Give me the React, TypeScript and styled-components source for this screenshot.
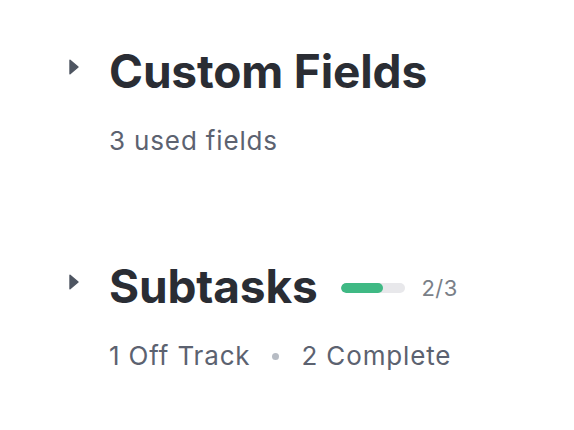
import React from "react";
import styled, { createGlobalStyle } from "styled-components";

const Global = createGlobalStyle`
  html, body { margin: 0; padding: 0; background: #ffffff; }
  body { font-family: Inter, "Noto Sans", sans-serif; }
`;

const Page = styled.div`
  display: flex;
  flex-direction: column;
  gap: 107px;
  padding: 48px 0 0 69px;
`;

const Section = styled.section`
  display: flex;
  flex-direction: column;
  gap: 32px;
`;

const HeaderRow = styled.div`
  display: flex;
  align-items: center;
  height: 46px;
`;

const Caret = styled.svg`
  width: 10px;
  height: 16px;
  flex: none;
  margin: 0 30px 8px 0;
`;

const Title = styled.h2`
  margin: 0;
  font-size: 46px;
  line-height: 46px;
  font-weight: 700;
  color: #2a2d34;
  letter-spacing: -0.15px;
`;

const Progress = styled.div`
  display: flex;
  align-items: center;
  gap: 17px;
  margin-left: 23px;
  padding-top: 4px;
`;

const Track = styled.div`
  width: 64px;
  height: 10px;
  border-radius: 5px;
  background: #e8e8eb;
  overflow: hidden;
`;

const Fill = styled.div`
  height: 100%;
  background: #3fb984;
  border-radius: 5px;
`;

const Count = styled.span`
  font-size: 22px;
  letter-spacing: 0.4px;
  color: #7a7f88;
`;

const Meta = styled.div`
  display: flex;
  align-items: center;
  gap: 22px;
  padding-left: 40px;
  font-size: 26px;
  line-height: 30px;
  letter-spacing: 0.85px;
  color: #5c6270;
`;

const Dot = styled.span`
  width: 7px;
  height: 7px;
  border-radius: 50%;
  background: #b7bcc4;
`;

const CaretIcon = () => (
  <Caret viewBox="0 0 10 16">
    <path
      d="M1 1.2 L9 8 L1 14.8 Z"
      fill="#4e5561"
      stroke="#4e5561"
      strokeWidth="1.4"
      strokeLinejoin="round"
    />
  </Caret>
);

export default function App() {
  return (
    <>
      <Global />
      <Page>
        <Section>
          <HeaderRow>
            <CaretIcon />
            <Title>Custom Fields</Title>
          </HeaderRow>
          <Meta>3 used fields</Meta>
        </Section>
        <Section>
          <HeaderRow>
            <CaretIcon />
            <Title>Subtasks</Title>
            <Progress>
              <Track>
                <Fill style={{ width: `${(2 / 3) * 100}%` }} />
              </Track>
              <Count>2/3</Count>
            </Progress>
          </HeaderRow>
          <Meta>
            <span>1 Off Track</span>
            <Dot />
            <span>2 Complete</span>
          </Meta>
        </Section>
      </Page>
    </>
  );
}
